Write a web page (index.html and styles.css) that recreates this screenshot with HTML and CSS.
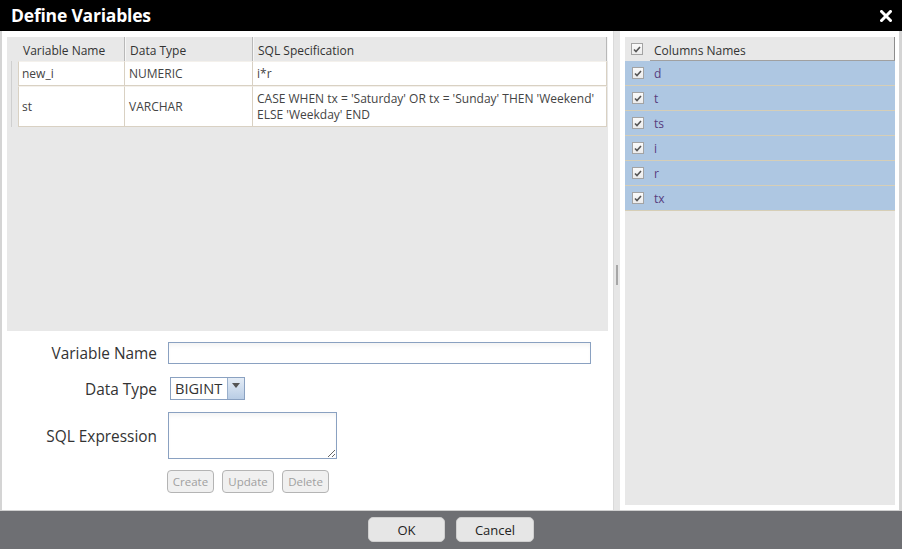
FILE: index.html
```html
<!DOCTYPE html>
<html>
<head>
<meta charset="utf-8">
<link rel="stylesheet" href="styles.css">
</head>
<body>
<div class="dialog">
  <div class="titlebar">
    <span class="title">Define Variables</span>
    <svg class="close" width="12" height="12" viewBox="0 0 12 12"><path d="M1.5 1.5 L10.5 10.5 M10.5 1.5 L1.5 10.5" stroke="#fff" stroke-width="3" stroke-linecap="square"/></svg>
  </div>
  <div class="content">
    <div class="left">
      <div class="grid">
        <div class="grid-head">
          <div class="handle-h"></div>
          <div class="hc c1">Variable Name</div>
          <div class="hc c2">Data Type</div>
          <div class="hc c3">SQL Specification</div>
        </div>
        <div class="grid-row">
          <div class="handle"><span class="hline"></span></div>
          <div class="cell c1">new_i</div>
          <div class="cell c2">NUMERIC</div>
          <div class="cell c3">i*r</div>
        </div>
        <div class="grid-row tall">
          <div class="handle"><span class="hline"></span></div>
          <div class="cell c1">st</div>
          <div class="cell c2">VARCHAR</div>
          <div class="cell c3">CASE WHEN tx = 'Saturday' OR tx = 'Sunday' THEN 'Weekend' ELSE 'Weekday' END</div>
        </div>
      </div>
      <div class="form">
        <label class="lbl">Variable Name</label>
        <div class="fld"><input class="txt" type="text"></div>
        <label class="lbl lbl-dt">Data Type</label>
        <div class="fld fld-dt">
          <div class="select"><span class="sel-val">BIGINT</span><span class="sel-btn"><svg width="8" height="5" viewBox="0 0 8 5"><path d="M0 0 H8 L4 5 Z" fill="#555"/></svg></span></div>
        </div>
        <label class="lbl lbl-sql">SQL Expression</label>
        <div class="fld"><textarea class="area"></textarea></div>
        <div></div>
        <div class="btns">
          <button class="dbtn w47" disabled>Create</button>
          <button class="dbtn w52" disabled>Update</button>
          <button class="dbtn w47" disabled>Delete</button>
        </div>
      </div>
    </div>
    <div class="splitter"><span class="grip"></span></div>
    <div class="right">
      <div class="cols">
        <div class="cols-head">
          <div class="cbcell"><span class="cb"><svg width="8" height="7" viewBox="0 0 8 7"><path d="M1 3.5 L3 5.5 L7 1" stroke="#555" stroke-width="1.6" fill="none"/></svg></span></div>
          <div class="ch">Columns Names</div>
        </div>
        <div class="cols-row"><div class="cbcell"><span class="cb"><svg width="8" height="7" viewBox="0 0 8 7"><path d="M1 3.5 L3 5.5 L7 1" stroke="#555" stroke-width="1.6" fill="none"/></svg></span></div><span class="cn">d</span></div>
        <div class="cols-row"><div class="cbcell"><span class="cb"><svg width="8" height="7" viewBox="0 0 8 7"><path d="M1 3.5 L3 5.5 L7 1" stroke="#555" stroke-width="1.6" fill="none"/></svg></span></div><span class="cn">t</span></div>
        <div class="cols-row"><div class="cbcell"><span class="cb"><svg width="8" height="7" viewBox="0 0 8 7"><path d="M1 3.5 L3 5.5 L7 1" stroke="#555" stroke-width="1.6" fill="none"/></svg></span></div><span class="cn">ts</span></div>
        <div class="cols-row"><div class="cbcell"><span class="cb"><svg width="8" height="7" viewBox="0 0 8 7"><path d="M1 3.5 L3 5.5 L7 1" stroke="#555" stroke-width="1.6" fill="none"/></svg></span></div><span class="cn">i</span></div>
        <div class="cols-row"><div class="cbcell"><span class="cb"><svg width="8" height="7" viewBox="0 0 8 7"><path d="M1 3.5 L3 5.5 L7 1" stroke="#555" stroke-width="1.6" fill="none"/></svg></span></div><span class="cn">r</span></div>
        <div class="cols-row"><div class="cbcell"><span class="cb"><svg width="8" height="7" viewBox="0 0 8 7"><path d="M1 3.5 L3 5.5 L7 1" stroke="#555" stroke-width="1.6" fill="none"/></svg></span></div><span class="cn">tx</span></div>
      </div>
    </div>
  </div>
  <div class="footer">
    <button class="fbtn ok">OK</button>
    <button class="fbtn cancel">Cancel</button>
  </div>
</div>
</body>
</html>
```
FILE: styles.css
```css
* { box-sizing: border-box; }
html, body { margin: 0; padding: 0; }
body {
  width: 902px;
  height: 549px;
  overflow: hidden;
  font-family: "Open Sans", "Liberation Sans", sans-serif;
  background: #fff;
}
.dialog {
  display: flex;
  flex-direction: column;
  width: 902px;
  height: 549px;
}
.titlebar {
  height: 31px;
  background: #000;
  display: flex;
  align-items: center;
  justify-content: space-between;
  padding: 0 10px 1px 11px;
  flex: none;
}
.title {
  color: #fff;
  font-weight: 700;
  font-size: 17.5px;
  letter-spacing: -0.2px;
}
.close { display: block; margin-top: 1px; }

.content {
  flex: 1;
  display: flex;
  border-left: 2px solid #d4d4d4;
  border-right: 3px solid #d4d4d4;
  background: #fff;
  min-height: 0;
}
.left {
  width: 606px;
  padding: 6px 0 0 5px;
  display: flex;
  flex-direction: column;
}
.grid {
  height: 294px;
  background: #e8e8e8;
  width: 601px;
}
.grid-head {
  display: flex;
  height: 24px;
  font-size: 12px;
  color: #333;
}
.handle-h { width: 11px; }
.hc {
  display: flex;
  align-items: center;
  padding-left: 5px;
  padding-top: 2px;
  border-right: 1px solid #b8b8b8;
  box-shadow: 1px 0 0 #f6f6f6;
}
.c1 { width: 107px; }
.c2 { width: 128px; }
.c3 { width: 354px; }
.grid-row {
  display: flex;
  height: 25px;
  font-size: 12px;
  color: #444;
}
.grid-row.tall { height: 41px; }
.handle {
  width: 11px;
  position: relative;
}
.hline {
  position: absolute;
  left: 4px;
  top: 0;
  bottom: 0;
  width: 1px;
  background: #cfcfcf;
}
.cell {
  background: #fff;
  border-right: 1px solid #d9d1c3;
  border-bottom: 1px solid #d9d1c3;
  border-top: 1px solid #f4f1ec;
  padding: 0 6px 0 4px;
  display: flex;
  align-items: center;
  line-height: 16px;
}
.cell.c1 { border-left: 1px solid #d9d1c3; padding-left: 3px; }
.cell.c2, .cell.c3 { padding-left: 4px; }

.form {
  display: grid;
  grid-template-columns: 150px auto;
  column-gap: 11px;
  row-gap: 12px;
  padding-top: 11px;
  align-items: center;
}
.lbl {
  text-align: right;
  font-size: 15.4px;
  color: #333;
}
.lbl-dt { padding-top: 2px; }
.lbl-sql { padding-top: 1px; }
.fld { display: flex; }
.fld-dt { padding-top: 1px; }
.txt {
  width: 423px;
  height: 22px;
  border: 1px solid #8aa1c1;
  box-shadow: inset 0 4px 5px -2px rgba(0,0,0,0.06);
  margin: 0;
  padding: 0 4px;
  font: 14px "Open Sans", sans-serif;
}
.select {
  margin-left: 2px;
  width: 75px;
  height: 23px;
  border: 1px solid #8aa1c1;
  display: flex;
  background: #fff;
}
.sel-val {
  flex: 1;
  font-size: 14.6px;
  color: #333;
  padding-left: 4px;
  line-height: 21px;
}
.sel-btn {
  width: 17px;
  border-left: 1px solid #9ab0cc;
  background: linear-gradient(#e4ecf6, #b9cde5);
  display: flex;
  align-items: center;
  justify-content: center;
}
.sel-btn svg { margin-top: -6px; }
.area {
  width: 169px;
  height: 47px;
  border: 1px solid #8aa1c1;
  box-shadow: inset 0 4px 5px -2px rgba(0,0,0,0.06);
  margin: 0;
  resize: both;
  font: 12px "Open Sans", sans-serif;
}
.btns {
  display: flex;
  gap: 8px;
  margin-left: -1px;
  margin-top: -1px;
}
.dbtn {
  height: 23px;
  border: 1px solid #b4b4b4;
  border-radius: 4px;
  background: #f0f0f0;
  color: #a0a0a0;
  font: 11.5px "Open Sans", sans-serif;
  padding: 0;
}
.w47 { width: 47px; }
.w52 { width: 52px; }

.splitter {
  width: 7px;
  margin-left: 5px;
  background: #e6e6e6;
  border-left: 1px solid #dadada;
  position: relative;
}
.grip {
  position: absolute;
  left: 2px;
  top: 234px;
  width: 2px;
  height: 20px;
  background: #a6a6a6;
}
.right {
  width: 279px;
  padding: 6px 4px 5px 5px;
  display: flex;
}
.cols {
  flex: 1;
  background: #e8e8e8;
}
.cols-head {
  display: flex;
  height: 24px;
}
.cbcell {
  width: 25px;
  display: flex;
  align-items: center;
  padding-left: 6px;
}
.cb {
  width: 12px;
  height: 12px;
  border: 1px solid #a3a3a3;
  background: linear-gradient(#fafafa, #ececec);
  display: flex;
  align-items: center;
  justify-content: center;
}
.ch {
  flex: 1;
  border-bottom: 1px solid #a0a0a0;
  border-right: 1px solid #8c8c8c;
  font-size: 12px;
  color: #333;
  display: flex;
  align-items: center;
  padding-left: 4px;
  padding-top: 3px;
}
.cols-row {
  display: flex;
  height: 25px;
  background: #aec7e2;
  border-bottom: 1px solid #d6ceb6;
}
.cols-row .cbcell { padding-left: 7px; }
.cn {
  font-size: 12px;
  color: #573d7e;
  display: flex;
  align-items: center;
  padding-left: 4px;
}

.footer {
  height: 39px;
  flex: none;
  background: #6e6f73;
  border-top: 1px solid #d0d0d0;
  display: flex;
  justify-content: center;
  align-items: center;
  gap: 11px;
  padding-bottom: 1px;
}
.fbtn {
  height: 25px;
  border: 1px solid #cfcfcf;
  border-radius: 5px;
  background: #e6e6e6;
  color: #222;
  font: 13px "Open Sans", sans-serif;
  padding: 0;
}
.ok { width: 77px; }
.cancel { width: 78px; }
```
